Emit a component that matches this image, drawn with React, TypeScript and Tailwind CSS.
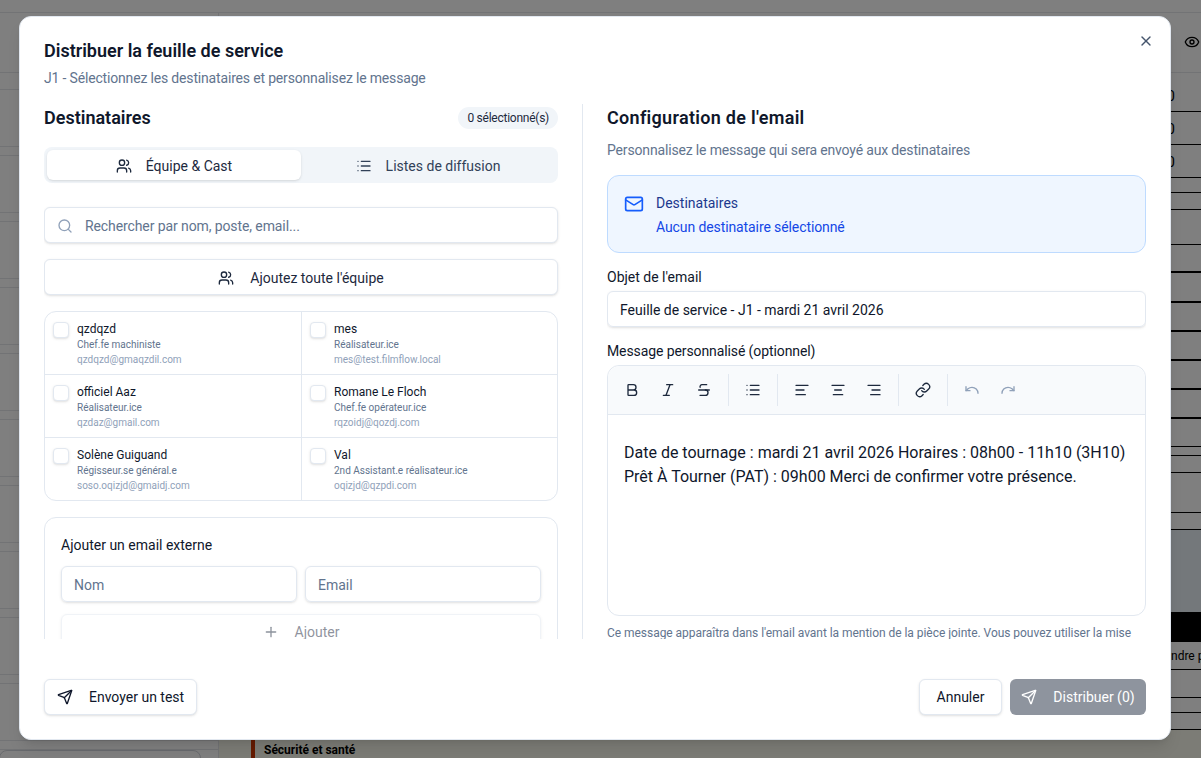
import { Users, List, Search, Mail, Send, Plus, X, Eye, Bold, Italic, Strikethrough, AlignLeft, AlignCenter, AlignRight, Link, Undo, Redo } from 'lucide-react';

const members = [
  { name: 'qzdqzd', role: 'Chef.fe machiniste', email: 'qzdqzd@gmaqzdil.com' },
  { name: 'mes', role: 'Réalisateur.ice', email: 'mes@test.filmflow.local' },
  { name: 'officiel Aaz', role: 'Réalisateur.ice', email: 'qzdaz@gmail.com' },
  { name: 'Romane Le Floch', role: 'Chef.fe opérateur.ice', email: 'rqzoidj@qozdj.com' },
  { name: 'Solène Guiguand', role: 'Régisseur.se général.e', email: 'soso.oqizjd@gmaidj.com' },
  { name: 'Val', role: '2nd Assistant.e réalisateur.ice', email: 'oqizjd@qzpdi.com' },
];

// lines of the table behind the dialog, from the top of the page
const tableRows = [
  'h-[39px] border-b border-black',
  'h-[33px] border-b border-black',
  'h-[33px] border-b border-black',
  'h-[15px] border-b border-black',
  'h-[17px] border-b border-black',
  'h-[35px] border-b border-black',
  'h-[28px] border-b-2 border-black',
  'h-[30px] border-b-2 border-black',
  'h-[29px] border-b-2 border-black',
  'h-[29px] border-b-2 border-black',
  'h-[29px] border-b-2 border-black',
  'h-[29px] border-b-2 border-black',
  'h-[28px] border-b border-black',
  'h-[9px] border-b border-black',
  'h-[17px] border-b border-black',
  'h-[40px] border-b border-black',
  'h-[17px] border-b border-black',
  'h-[82px] bg-[#e8f0f6]',
  'h-[30px] bg-black',
  'h-[28px] border-b border-black',
  'h-[28px] border-b border-black',
  'h-[15px] border-b border-black',
  'h-[17px] border-b border-black',
];

function BackgroundPage() {
  return (
    <div className="flex h-[758px] flex-col overflow-hidden bg-white">
      <div className="h-[13px] shrink-0 border-b border-gray-200" />
      <div className="flex min-h-0 flex-1">
        {/* Sidebar */}
        <div className="w-[219px] shrink-0 border-r border-gray-200">
          <div className="h-[60px] border-b border-gray-200" />
          <div className="h-[17px] border-b border-gray-200" />
          {Array.from({ length: 10 }).map((_, i) => (
            <div key={i}>
              <div className="h-[57px] border-b border-gray-200" />
              <div className="h-[9px] border-b border-gray-200" />
            </div>
          ))}
          <div className="-ml-px h-8 w-[202px] rounded-lg border border-gray-300" />
        </div>

        {/* Main */}
        <div className="flex min-w-0 flex-1 flex-col">
          <div className="flex h-[60px] shrink-0 justify-end border-b border-gray-200 pr-[1px] pt-[21px]">
            <Eye className="h-4 w-4 text-black" />
          </div>
          <div className="flex h-[657px] shrink-0 justify-end overflow-hidden">
            <div className="w-[30px] shrink-0 text-sm text-black">
              {tableRows.map((row, i) => (
                <div key={i} className={row}>
                  {i < 3 && <span className="-ml-1 flex h-full items-end pb-[7px] leading-4">0</span>}
                  {i === 19 && <span className="flex h-full items-center whitespace-nowrap text-xs">ndre pa</span>}
                </div>
              ))}
            </div>
          </div>
          <div className="flex-1 bg-[#f8f8ec] pl-8">
            <div className="flex h-full items-end border-l-4 border-orange-700 pl-[9px] text-xs leading-4 font-bold text-black">
              Sécurité et santé
            </div>
          </div>
        </div>
      </div>
    </div>
  );
}

function MemberCell({ name, role, email, index }: { name: string; role: string; email: string; index: number }) {
  return (
    <div
      className={
        'flex gap-2 px-2 pt-2 ' +
        (index % 2 === 0 ? 'border-r border-slate-200 ' : '') +
        (index < 4 ? 'h-[63px] border-b border-slate-200' : 'h-[62px]')
      }
    >
      <div className="mt-[2px] h-4 w-4 shrink-0 rounded-[4px] border border-slate-200 bg-white shadow-sm" />
      <div className="min-w-0">
        <p className="pt-px text-xs leading-4 text-slate-900">{name}</p>
        <p className="text-[10px] leading-[15px] text-slate-500">{role}</p>
        <p className="text-[10px] leading-[15px] text-slate-400">{email}</p>
      </div>
    </div>
  );
}

function Divider() {
  return <div className="mx-2 h-8 w-px bg-slate-200" />;
}

function ToolButton({ children, muted }: { children: React.ReactNode; muted?: boolean }) {
  return (
    <button className={'flex h-8 w-8 items-center justify-center rounded-md ' + (muted ? 'text-slate-400' : 'text-slate-800')}>
      {children}
    </button>
  );
}

function LeftColumn() {
  return (
    <div className="h-[535px] overflow-hidden border-r border-slate-200 pr-6">
      <div className="flex h-[28px] items-center justify-between">
        <h3 className="text-lg font-semibold text-slate-900">Destinataires</h3>
        <span className="rounded-full bg-slate-100 px-[9px] py-[3px] text-xs tracking-[-0.25px] text-slate-800">0 sélectionné(s)</span>
      </div>

      {/* Tabs */}
      <div className="mt-[15px] grid h-9 grid-cols-2 rounded-lg bg-slate-100 p-[3px] text-sm">
        <div className="flex items-center justify-center gap-[14px] rounded-md bg-white pt-px text-slate-800 shadow-sm">
          <Users className="h-4 w-4" />
          Équipe &amp; Cast
        </div>
        <div className="flex items-center justify-center gap-[14px] rounded-md pt-px text-slate-700">
          <List className="h-4 w-4" />
          Listes de diffusion
        </div>
      </div>

      {/* Search */}
      <div className="mt-6 flex h-9 items-center gap-3 rounded-md border border-slate-200 bg-white px-3 pt-px text-sm tracking-[-0.1px] text-slate-500 shadow-sm">
        <Search className="h-4 w-4 text-slate-400" />
        Rechercher par nom, poste, email...
      </div>

      <button className="mt-4 flex h-9 w-full items-center justify-center gap-4 rounded-md border border-slate-200 bg-white pt-px text-sm text-slate-800 shadow-sm">
        <Users className="h-4 w-4" />
        Ajoutez toute l'équipe
      </button>

      {/* Members */}
      <div className="mt-4 grid grid-cols-[257px_1fr] rounded-xl border border-slate-200">
        {members.map((m, i) => (
          <MemberCell key={m.email} {...m} index={i} />
        ))}
      </div>

      {/* External email */}
      <div className="mt-4 rounded-xl border border-slate-200 p-4">
        <p className="pt-px text-sm leading-5 text-slate-900">Ajouter un email externe</p>
        <div className="mt-[11px] grid grid-cols-2 gap-2">
          <div className="flex h-9 items-center rounded-md border border-slate-200 px-3 pt-px text-sm text-slate-500 shadow-sm">Nom</div>
          <div className="flex h-9 items-center rounded-md border border-slate-200 px-3 pt-px text-sm text-slate-500 shadow-sm">Email</div>
        </div>
        <button className="mt-3 flex h-9 w-full items-center justify-center gap-4 rounded-md border border-slate-200 pb-px text-sm text-slate-800 opacity-50 shadow-sm">
          <Plus className="h-4 w-4" />
          Ajouter
        </button>
      </div>
    </div>
  );
}

function RightColumn() {
  return (
    <div className="flex h-[535px] flex-col overflow-hidden">
      <h3 className="flex h-[28px] shrink-0 items-center text-lg font-semibold tracking-[0.3px] text-slate-900">Configuration de l'email</h3>
      <p className="mt-2 text-sm leading-5 tracking-[-0.16px] text-slate-500">Personnalisez le message qui sera envoyé aux destinataires</p>

      <div className="mt-[15px] flex h-[78px] shrink-0 gap-3 rounded-xl border border-blue-200 bg-blue-50 px-4 pt-[17px]">
        <Mail className="mt-px h-5 w-5 text-blue-600" />
        <div className="text-sm leading-5">
          <p className="text-blue-900">Destinataires</p>
          <p className="mt-1 tracking-[-0.1px] text-blue-700">Aucun destinataire sélectionné</p>
        </div>
      </div>

      <label className="mt-[14px] text-sm leading-5 text-slate-900">Objet de l'email</label>
      <div className="mt-1 flex h-9 shrink-0 items-center rounded-md border border-slate-200 px-3 pt-px text-sm text-slate-900 shadow-sm">
        Feuille de service - J1 - mardi 21 avril 2026
      </div>

      <label className="mt-[14px] text-sm leading-5 tracking-[-0.1px] text-slate-900">Message personnalisé (optionnel)</label>
      <div className="mt-1 h-[251px] shrink-0 rounded-xl border border-slate-200">
        <div className="flex h-[49px] items-center rounded-t-xl border-b border-slate-200 bg-slate-50 px-2">
          <ToolButton><Bold className="h-4 w-4" /></ToolButton>
          <div className="w-1" />
          <ToolButton><Italic className="h-4 w-4" /></ToolButton>
          <div className="w-1" />
          <ToolButton><Strikethrough className="h-4 w-4" /></ToolButton>
          <Divider />
          <ToolButton><List className="h-4 w-4" /></ToolButton>
          <Divider />
          <ToolButton><AlignLeft className="h-4 w-4" /></ToolButton>
          <div className="w-1" />
          <ToolButton><AlignCenter className="h-4 w-4" /></ToolButton>
          <div className="w-1" />
          <ToolButton><AlignRight className="h-4 w-4" /></ToolButton>
          <Divider />
          <ToolButton><Link className="h-4 w-4" /></ToolButton>
          <Divider />
          <ToolButton muted><Undo className="h-4 w-4" /></ToolButton>
          <div className="w-1" />
          <ToolButton muted><Redo className="h-4 w-4" /></ToolButton>
        </div>
        <div className="px-4 pt-[26px] text-base leading-6 text-slate-900">
          Date de tournage : mardi 21 avril 2026 Horaires : 08h00 - 11h10 (3H10) Prêt À Tourner (PAT) : 09h00 Merci de confirmer votre présence.
        </div>
      </div>
      <p className="mt-[9px] text-xs leading-4 tracking-[-0.04px] text-slate-500">
        Ce message apparaîtra dans l'email avant la mention de la pièce jointe. Vous pouvez utiliser la mise en forme.
      </p>
    </div>
  );
}

export default function App() {
  return (
    <div className="relative h-[758px] overflow-hidden font-['Roboto',sans-serif]">
      <BackgroundPage />

      {/* Overlay */}
      <div className="absolute inset-0 bg-black/50">
        <div className="relative ml-[19px] mt-4 h-[724px] w-[1152px] rounded-xl border border-slate-200 bg-white px-6 pt-6 shadow-lg">
          <button className="absolute right-4 top-4 text-slate-600">
            <X className="h-4 w-4" />
          </button>

          <h2 className="text-lg leading-5 font-semibold text-slate-900">Distribuer la feuille de service</h2>
          <p className="mt-[7px] text-sm leading-5 tracking-[-0.17px] text-slate-500">J1 - Sélectionnez les destinataires et personnalisez le message</p>

          <div className="mt-4 grid grid-cols-2 gap-6">
            <LeftColumn />
            <RightColumn />
          </div>

          {/* Footer */}
          <div className="mt-10 flex items-center justify-between">
            <button className="flex h-9 items-center gap-4 rounded-md border border-slate-200 bg-white px-3 text-sm text-slate-900 shadow-sm">
              <Send className="h-4 w-4" />
              Envoyer un test
            </button>
            <div className="flex gap-2">
              <button className="h-9 w-[83px] rounded-md border border-slate-200 bg-white text-sm text-slate-900 shadow-sm">
                Annuler
              </button>
              <button className="flex h-9 w-[136px] items-center justify-center gap-4 rounded-md bg-[#8e949e] text-sm text-white">
                <Send className="h-4 w-4" />
                Distribuer (0)
              </button>
            </div>
          </div>
        </div>
      </div>
    </div>
  );
}
